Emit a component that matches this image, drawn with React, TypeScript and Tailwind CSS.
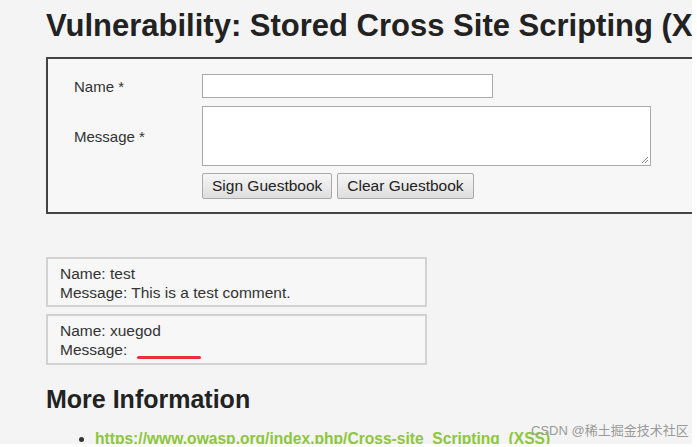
import React from "react";

export default function App() {
  return (
    <div className="w-[697px] h-[447px] bg-white overflow-hidden" style={{ fontFamily: '"Liberation Sans", Arial, sans-serif' }}>
      <div className="relative w-[692px] h-[444px] bg-[#f4f4f4] overflow-hidden pl-[46px]">
        <h1 className="pt-[8px] text-[31px] leading-[36px] font-bold text-[#222] whitespace-nowrap tracking-[0px]">
          Vulnerability: Stored Cross Site Scripting (XSS)
        </h1>
        <div className="mt-[13px] w-[700px] h-[157px] border-2 border-[#444] border-r-0 bg-[#f7f7f7] pl-[26px] pt-[15px]">
          <div className="flex">
            <div className="w-[128px] text-[15px] text-[#333] pt-[2px]">Name *</div>
            <div className="w-[291px] h-[24px] border border-[#aaa] bg-white"></div>
          </div>
          <div className="flex mt-[7px]">
            <div className="w-[128px] text-[15px] text-[#333] pt-[20px]">Message *</div>
            <div className="relative w-[449px] h-[60px] border border-[#aaa] bg-white">
              <svg className="absolute right-[1px] bottom-[1px]" width="9" height="9" viewBox="0 0 9 9">
                <line x1="8" y1="2" x2="2" y2="8" stroke="#888" strokeWidth="1" />
                <line x1="8" y1="5" x2="5" y2="8" stroke="#888" strokeWidth="1" />
              </svg>
            </div>
          </div>
          <div className="flex mt-[7px] ml-[128px] gap-[5px]">
            <div className="h-[26px] px-[9px] border border-[#aaa] rounded-[2px] bg-gradient-to-b from-[#f6f6f6] to-[#dedede] text-[15.5px] leading-[24px] text-[#222]">Sign Guestbook</div>
            <div className="h-[26px] px-[9px] border border-[#aaa] rounded-[2px] bg-gradient-to-b from-[#f6f6f6] to-[#dedede] text-[15.5px] leading-[24px] text-[#222]">Clear Guestbook</div>
          </div>
        </div>
        <div className="mt-[43px] w-[381px] h-[50px] border-2 border-[#d2d2d2] bg-[#f7f7f7] pl-[12px] pt-[5px] text-[15.5px] leading-[19px] text-[#333]">
          <div>Name: test</div>
          <div>Message: This is a test comment.</div>
        </div>
        <div className="relative mt-[7px] w-[381px] h-[51px] border-2 border-[#d2d2d2] bg-[#f7f7f7] pl-[12px] pt-[5px] text-[15.5px] leading-[19px] text-[#333]">
          <div>Name: xuegod</div>
          <div>Message:</div>
          <div className="absolute left-[89px] top-[40px] w-[64px] h-[3px] rounded-full bg-[#e8303a]"></div>
        </div>
        <h2 className="mt-[19px] text-[25px] leading-[30px] font-bold text-[#222]">More Information</h2>
        <ul className="mt-[13px] pl-[49px] list-disc text-[15.6px] font-bold text-[#8dc63f]">
          <li className="marker:text-[#333]">
            <span>https://www.owasp.org/index.php/Cross-site_Scripting_(XSS)</span>
          </li>
        </ul>
        <div className="absolute left-[531px] top-[421px] text-[13px] leading-[20px] text-[#9a9a9a] whitespace-nowrap" style={{ fontFamily: '"Liberation Sans", "Noto Sans CJK SC", sans-serif' }}>
          CSDN @稀土掘金技术社区
        </div>
      </div>
    </div>
  );
}
